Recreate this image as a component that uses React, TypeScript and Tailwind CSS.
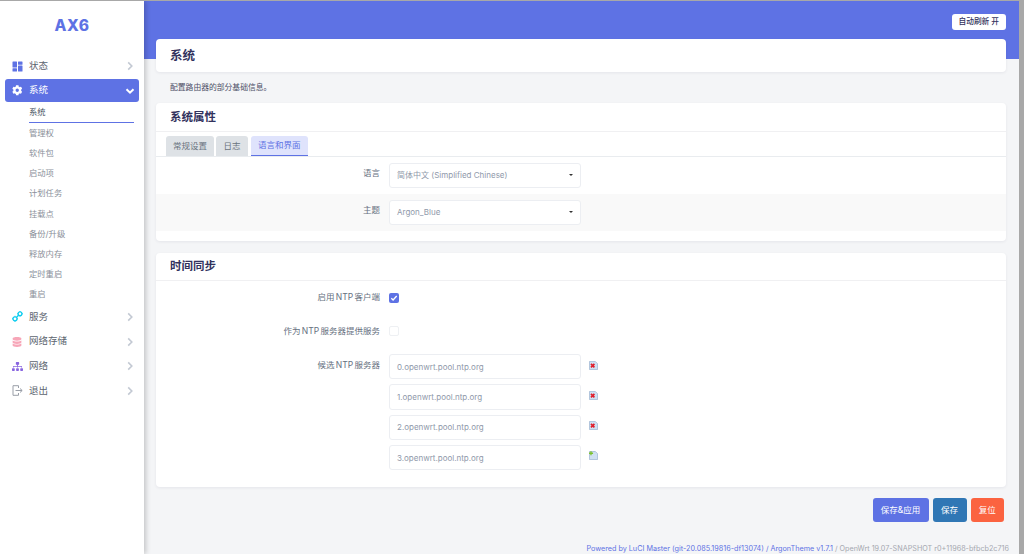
import React from "react";
import { FaCog, FaDatabase, FaSitemap } from "react-icons/fa";

const F = "font-['Inter','Noto_Sans_CJK_SC',sans-serif]";

function Chevron({ down, white }: { down?: boolean; white?: boolean }) {
  return (
    <svg width="10" height="10" viewBox="0 0 10 10">
      <path d={down ? "M1.5 3.2L5 6.7l3.5-3.5" : "M3.2 1.4L6.8 5 3.2 8.600"} fill="none" stroke={white ? "#fff" : "#c3c9d3"} strokeWidth={down ? 2 : 1.6} />
    </svg>
  );
}

function Dash() {
  return (
    <svg width="11" height="11" viewBox="0 0 11 11" fill="#5e72e4">
      <rect x="0.500" y="0.500" width="4.500" height="6" rx="0.500" />
      <rect x="0.500" y="7.300" width="4.500" height="3.200" rx="0.500" />
      <rect x="6" y="0.500" width="4.500" height="3.200" rx="0.500" />
      <rect x="6" y="4.500" width="4.500" height="6" rx="0.500" />
    </svg>
  );
}
function Cogs() {
  return (
    <svg width="11" height="11" viewBox="0 0 11 11" fill="none" stroke="#11cdef" strokeWidth="1.300">
      <circle cx="3" cy="7.800" r="2" />
      <circle cx="8" cy="2.800" r="1.900" />
      <path d="M4.600 6.300l1.900-2" />
      <path d="M3 4.800v1M3 9.800v1M0 7.800h1M5 7.800h1M8 0v1M8 4.700v1M5.200 2.800h1M9.900 2.800h1" strokeWidth="1" />
    </svg>
  );
}
function Logout() {
  return (
    <svg width="11" height="11" viewBox="0 0 11 11" fill="none" stroke="#9a9fa8" strokeWidth="1">
      <path d="M6.500 3V0.700H1v9.600h5.500V8" />
      <path d="M3.500 5.500h6.500M8 3.500l2.200 2-2.200 2" />
    </svg>
  );
}

function NavItem({ icon, label }: { icon: React.ReactNode; label: string }) {
  return (
    <div className="flex items-center h-[24.700px] pl-[6px] pr-[4px] mx-[5px] text-[9.500px] text-[#5d6570]">
      <span className="w-[12px] flex justify-center mr-[6px]">{icon}</span>
      <span className="flex-1">{label}</span>
      <Chevron />
    </div>
  );
}

function FileIcon({ add }: { add?: boolean }) {
  return (
    <svg width="9" height="9" viewBox="0 0 10 10" className="ml-[7.500px] mt-[6.500px]">
      <path d="M0.500 0.500h6.500l2.500 2.500v6.500H0.500z" fill="#cfe0f2" stroke="#9bb3d0" strokeWidth="0.800" />
      {add ? (
        <path d="M0 2.500h4.500M2.200 .3v4.500" stroke="#7cc22c" strokeWidth="1.400" />
      ) : (
        <path d="M2.200 3.200l3.800 3.800M6 3.200L2.200 7" stroke="#e0202c" strokeWidth="1.900" />
      )}
    </svg>
  );
}

function Input({ v, add }: { v: string; add?: boolean }) {
  return (
    <div className="flex items-start mb-[5px]">
      <div className="w-[192px] h-[25.300px] bg-white border border-[#eceef2] rounded-[3px] pl-[7px] flex items-center text-[8px] text-[#8f99aa]">{v}</div>
      <FileIcon add={add} />
    </div>
  );
}

function Select({ v }: { v: string }) {
  return (
    <div className="w-[192px] h-[25.300px] bg-white border border-[#eceef2] rounded-[3px] pl-[7px] pr-[7.500px] flex items-center justify-between text-[8px] text-[#8f99aa]">
      <span>{v}</span>
      <span className="w-0 h-0 border-x-[2px] border-x-transparent border-t-[2.500px] border-t-[#333]" />
    </div>
  );
}

const card = "bg-white rounded-[4px] shadow-[0_1px_3px_rgba(50,50,93,0.08)]";
const lbl = "w-[224px] text-right text-[8.500px] text-[#667080] [word-spacing:-1px]";

export default function App() {
  const subs = ["管理权", "软件包", "启动项", "计划任务", "挂载点", "备份/升级", "释放内存", "定时重启", "重启"];
  return (
    <div className={`${F} h-[554px] w-[1024px] overflow-hidden flex bg-[#f4f5f7] border-t border-[#a8a8a8]`}>
      <aside className="w-[144px] shrink-0 bg-white shadow-[2px_0_5px_rgba(0,0,0,0.2)] z-10 flex flex-col">
        <div className="h-[53px] flex items-center justify-center pb-[4px] text-[15.500px] font-extrabold text-[#5e72e4] tracking-[0.5px]">AX6</div>
        <NavItem icon={<Dash />} label="状态" />
        <div className="mx-[5px] h-[23.700px] rounded-[3px] bg-[#5e72e4] flex items-center pl-[6px] pr-[4px] text-[9.500px] text-white">
          <span className="w-[12px] flex justify-center mr-[6px]"><FaCog size={10.500} color="#fff" /></span>
          <span className="flex-1">系统</span>
          <Chevron down white />
        </div>
        <div className="ml-[29px] mr-[10px] h-[20.500px] flex items-center text-[8.300px] text-[#4b5563] border-b border-[#5e72e4]">系统</div>
        {subs.map((s) => (
          <div key={s} className="ml-[29px] h-[20.200px] flex items-center text-[8.300px] text-[#8a909a]">{s}</div>
        ))}
        <NavItem icon={<Cogs />} label="服务" />
        <NavItem icon={<FaDatabase size={10} color="#f7a6b8" />} label="网络存储" />
        <NavItem icon={<FaSitemap size={11} color="#8965e0" />} label="网络" />
        <NavItem icon={<Logout />} label="退出" />
      </aside>
      <main className="flex-1 min-w-0 flex">
        <div className="flex-1 min-w-0 relative">
          <div className="h-[58px] bg-[#5e72e4] absolute inset-x-0 top-0" />
          <div className="relative pl-[12px] pr-[13px]">
            <div className="h-[38px] flex justify-end items-start pt-[13px]">
              <span className="h-[16px] px-[7px] bg-white rounded-[3px] text-[7.700px] font-medium text-[#32325d] flex items-center">自动刷新 开</span>
            </div>
            <div className={`${card} h-[33px] flex items-center pl-[14px] pt-[2px] text-[12.500px] font-semibold text-[#32325d]`}>系统</div>
            <div className="h-[31px] flex items-center pl-[14px] pt-[1px] text-[7.800px] text-[#4c4f66]">配置路由器的部分基础信息。</div>
            <div className={`${card} h-[138px] flex flex-col`}>
              <div className="h-[29px] flex items-center pl-[14px] pt-[1px] text-[11.500px] font-semibold text-[#32325d] border-b border-[#f0f0f2] shrink-0">系统属性</div>
              <div className="h-[25px] pl-[10px] flex items-end gap-[2px] border-b border-[#e9ecef] shrink-0">
                <div className="h-[20px] px-[7px] bg-[#dee2e6] rounded-t-[3px] flex items-center text-[8.500px] text-[#6a7480]">常规设置</div>
                <div className="h-[20px] px-[7.500px] bg-[#dee2e6] rounded-t-[3px] flex items-center text-[8.500px] text-[#6a7480]">日志</div>
                <div className="h-[20px] px-[7px] bg-[#dfe3fc] rounded-t-[3px] flex items-center text-[8.500px] text-[#5e72e4] border-b border-[#5e72e4] ml-[1px]">语言和界面</div>
              </div>
              <div className="h-[37px] flex items-center">
                <div className={`${lbl} pb-[4px]`}>语言</div>
                <div className="ml-[9px]"><Select v="简体中文 (Simplified Chinese)" /></div>
              </div>
              <div className="h-[37px] flex items-center bg-[#f9f9f9]">
                <div className={`${lbl} pb-[4px]`}>主题</div>
                <div className="ml-[9px]"><Select v="Argon_Blue" /></div>
              </div>
            </div>
            <div className={`${card} h-[234px] mt-[12px] flex flex-col`}>
              <div className="h-[28px] flex items-center pl-[14px] pt-[1px] text-[11.500px] font-semibold text-[#32325d] border-b border-[#f0f0f2] shrink-0">时间同步</div>
              <div className="h-[33.500px] flex items-center">
                <div className={lbl}>启用 NTP 客户端</div>
                <span className="ml-[9px] w-[10px] h-[10px] rounded-[2px] bg-[#5e72e4] flex items-center justify-center">
                  <svg width="8" height="8" viewBox="0 0 8 8"><path d="M1.300 4.200l1.800 1.800 3.600-4" fill="none" stroke="#fff" strokeWidth="1.300" /></svg>
                </span>
              </div>
              <div className="h-[33.500px] flex items-center">
                <div className={lbl}>作为 NTP 服务器提供服务</div>
                <span className="ml-[9px] w-[10px] h-[10px] rounded-[2px] bg-white border border-[#eef0f3]" />
              </div>
              <div className="flex items-start pt-[6px]">
                <div className={`${lbl} pt-[5px]`}>候选 NTP 服务器</div>
                <div className="ml-[9px] flex flex-col">
                  <Input v="0.openwrt.pool.ntp.org" />
                  <Input v="1.openwrt.pool.ntp.org" />
                  <Input v="2.openwrt.pool.ntp.org" />
                  <Input v="3.openwrt.pool.ntp.org" add />
                </div>
              </div>
            </div>
            <div className="flex justify-end gap-[4px] mt-[11px] mr-[2px]">
              <div className="w-[56px] h-[24px] rounded-[3px] bg-[#5e72e4] text-white text-[8.500px] flex items-center justify-center">保存&amp;应用</div>
              <div className="w-[34px] h-[24px] rounded-[3px] bg-[#3077b5] text-white text-[8.500px] flex items-center justify-center">保存</div>
              <div className="w-[33.500px] h-[24px] rounded-[3px] bg-[#fb6340] text-white text-[8.500px] flex items-center justify-center">复位</div>
            </div>
            <div className="text-right text-[7.220px] mt-[22px] -mr-[3px] whitespace-nowrap">
              <span className="text-[#5e72e4]">Powered by LuCI Master (git-20.085.19816-df13074) / ArgonTheme v1.7.1</span>
              <span className="text-[#a5a8b0]"> / OpenWrt 19.07-SNAPSHOT r0+11968-bfbcb2c716</span>
            </div>
          </div>
        </div>
        <div className="w-[5px] shrink-0 bg-[#a8a8a8]" />
      </main>
    </div>
  );
}
